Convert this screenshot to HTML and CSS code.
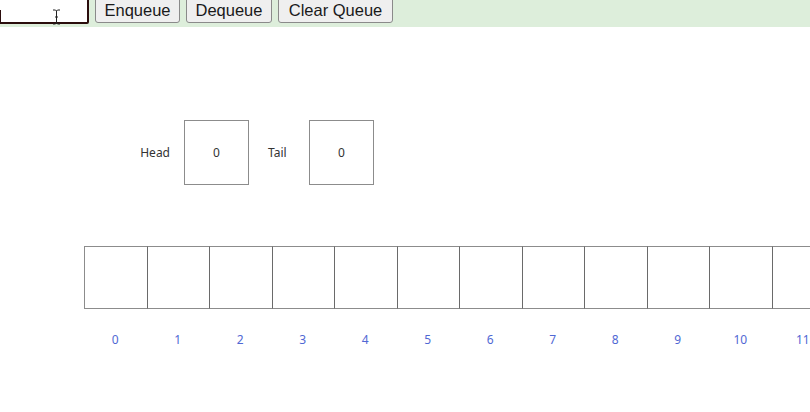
FILE: index.html
```html
<!DOCTYPE html>
<html>
<head>
<meta charset="utf-8">
<link rel="stylesheet" href="styles.css">
</head>
<body>
<div class="toolbar">
  <input class="field" type="text">
  <span class="caret"></span>
  <button class="btn btn-enq">Enqueue</button>
  <button class="btn btn-deq">Dequeue</button>
  <button class="btn btn-clear">Clear Queue</button>
  <svg class="ibeam" width="9" height="16" viewBox="0 0 9 16"><path d="M1 1h2.5l1 1 1-1H8M4.5 2v12M1 15h2.5l1-1 1 1H8M3 8h3" fill="none" stroke="#222" stroke-width="1"/></svg>
</div>
<div class="canvas">
  <div class="pointers">
    <span class="plabel head-label">Head</span>
    <div class="pbox">0</div>
    <span class="plabel tail-label">Tail</span>
    <div class="pbox">0</div>
  </div>
  <div class="array">
    <div class="cell"></div><div class="cell"></div><div class="cell"></div><div class="cell"></div>
    <div class="cell"></div><div class="cell"></div><div class="cell"></div><div class="cell"></div>
    <div class="cell"></div><div class="cell"></div><div class="cell"></div><div class="cell"></div>
  </div>
  <div class="indices">
    <span>0</span><span>1</span><span>2</span><span>3</span><span>4</span><span>5</span>
    <span>6</span><span>7</span><span>8</span><span>9</span><span>10</span><span>11</span>
  </div>
</div>
</body>
</html>
```
FILE: styles.css
```css
html, body {
  margin: 0;
  padding: 0;
  overflow: hidden;
  background: #ffffff;
}
body {
  width: 810px;
  height: 412px;
  font-family: "Noto Sans", "DejaVu Sans", sans-serif;
}
.toolbar {
  position: relative;
  height: 27px;
  box-sizing: border-box;
  background: #ddeedb;
  display: flex;
  align-items: flex-end;
  padding-bottom: 3px;
  overflow: hidden;
}
.field {
  box-sizing: border-box;
  width: 96px;
  height: 32px;
  margin: 0 0 0 -7px;
  border: 2px solid #2b0d0d;
  border-radius: 2px;
  background: #fff;
  outline: none;
  padding: 0;
}
.caret {
  position: absolute;
  left: 0;
  top: 10px;
  width: 1px;
  height: 13px;
  background: #2b0d0d;
}
.btn {
  box-sizing: border-box;
  height: 30px;
  margin: 0 0 1px 6px;
  padding: 4px 6px 0;
  border: 1px solid #8a8a8a;
  border-radius: 3px;
  background: #efefef;
  color: #1a1a1a;
  font-family: "Liberation Sans", Arial, sans-serif;
  font-size: 16.5px;
  line-height: 20px;
}
.btn-enq { width: 85px; }
.btn-deq { width: 86px; margin-left: 6px; }
.btn-clear { width: 115px; }
.ibeam {
  position: absolute;
  left: 52px;
  top: 9px;
}
.canvas {
  padding-top: 93px;
}
.pointers {
  display: flex;
  align-items: center;
  height: 65px;
  padding-left: 130px;
}
.plabel {
  font-size: 12px;
  color: #333;
}
.head-label {
  width: 40px;
  text-align: right;
  margin-right: 14px;
}
.tail-label { width: 41px; margin-left: 19px; }
.pbox {
  box-sizing: border-box;
  width: 65px;
  height: 65px;
  border: 1px solid #8c8c8c;
  display: flex;
  align-items: center;
  justify-content: center;
  font-size: 12px;
  color: #333;
}
.array {
  display: grid;
  grid-template-columns: repeat(12, 62.5px);
  margin: 61px 0 0 84px;
  width: 760px;
}
.cell {
  box-sizing: border-box;
  height: 63px;
  border-top: 1px solid #8c8c8c;
  border-bottom: 1px solid #8c8c8c;
  border-left: 1px solid #6a6a6a;
}
.cell:first-child { border-left-color: #8c8c8c; }
.indices {
  display: grid;
  grid-template-columns: repeat(12, 62.5px);
  margin: 23px 0 0 84px;
  width: 760px;
}
.indices span {
  text-align: center;
  font-size: 12px;
  line-height: 16px;
  color: #5068d4;
}
```
